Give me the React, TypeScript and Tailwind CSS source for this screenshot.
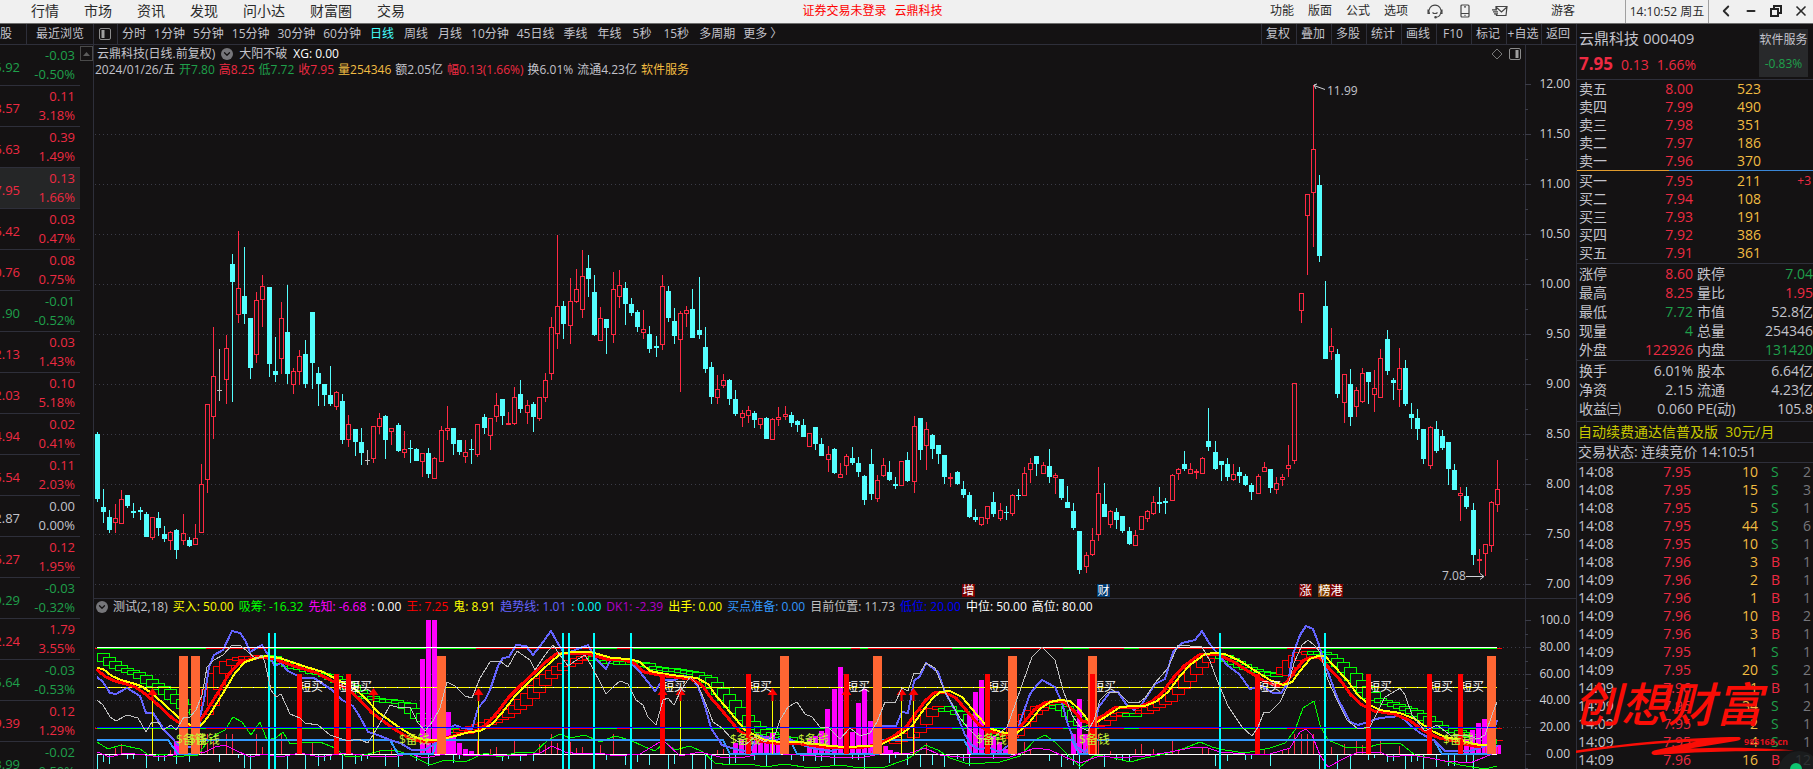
import { useState } from "react";
import { ChevronDown, ChevronLeft, Minus, X } from "lucide-react";

const MENU = ["行情", "市场", "资讯", "发现", "问小达", "财富圈", "交易"];
const TOOLS = ["功能", "版面", "公式", "选项"];
const ACTIONS = ["复权", "叠加", "多股", "统计", "画线", "F10", "标记", "+自选", "返回"];

const PERIODS = [
  { name: "分时", pad: "px-1" },
  { name: "1分钟", pad: "px-1" },
  { name: "5分钟", pad: "px-1" },
  { name: "15分钟", pad: "px-1" },
  { name: "30分钟", pad: "px-1" },
  { name: "60分钟", pad: "px-1" },
  { name: "日线", pad: "px-[5px]" },
  { name: "周线", pad: "px-[5px]" },
  { name: "月线", pad: "px-[5px]" },
  { name: "10分钟", pad: "px-1" },
  { name: "45日线", pad: "px-1" },
  { name: "季线", pad: "px-[5px]" },
  { name: "年线", pad: "px-[5px]" },
  { name: "5秒", pad: "px-1.5" },
  { name: "15秒", pad: "px-1.5" },
  { name: "多周期", pad: "px-1" },
  { name: "更多 〉", pad: "px-1" },
];

const WATCH = [
  ["5.92", "-0.03", "-0.50%"],
  ["3.57", "0.11", "3.18%"],
  ["26.63", "0.39", "1.49%"],
  ["7.95", "0.13", "1.66%"],
  ["6.42", "0.03", "0.47%"],
  ["10.76", "0.08", "0.75%"],
  ["1.90", "-0.01", "-0.52%"],
  ["2.13", "0.03", "1.43%"],
  ["2.03", "0.10", "5.18%"],
  ["4.94", "0.02", "0.41%"],
  ["5.54", "0.11", "2.03%"],
  ["2.87", "0.00", "0.00%"],
  ["6.27", "0.12", "1.95%"],
  ["9.29", "-0.03", "-0.32%"],
  ["52.24", "1.79", "3.55%"],
  ["5.64", "-0.03", "-0.53%"],
  ["9.39", "0.12", "1.29%"],
  ["3.99", "-0.02", "-0.50%"],
];

const ASKS = [
  ["卖五", "8.00", "523"],
  ["卖四", "7.99", "490"],
  ["卖三", "7.98", "351"],
  ["卖二", "7.97", "186"],
  ["卖一", "7.96", "370"],
];

const BIDS = [
  ["买一", "7.95", "211", "+3"],
  ["买二", "7.94", "108"],
  ["买三", "7.93", "191"],
  ["买四", "7.92", "386"],
  ["买五", "7.91", "361"],
];

const RED = "text-[#ee2a42]";
const GREEN = "text-[#1fa04b]";
const GRAY = "text-[#c3c3cb]";
const GOLD = "text-[#f2bd42]";

const STATS = [
  ["涨停", "8.60", RED, "跌停", "7.04", GREEN],
  ["最高", "8.25", RED, "量比", "1.95", RED],
  ["最低", "7.72", GREEN, "市值", "52.8亿", GRAY],
  ["现量", "4", GREEN, "总量", "254346", GRAY],
  ["外盘", "122926", RED, "内盘", "131420", GREEN],
];

const FUNDAMENTALS = [
  ["换手", "6.01%", GRAY, "股本", "6.64亿", GRAY],
  ["净资", "2.15", GRAY, "流通", "4.23亿", GRAY],
  ["收益㈢", "0.060", GRAY, "PE(动)", "105.8", GRAY],
];

const TRADES = [
  ["14:08", "7.95", "10", "S", "2"],
  ["14:08", "7.95", "15", "S", "3"],
  ["14:08", "7.95", "5", "S", "1"],
  ["14:08", "7.95", "44", "S", "6"],
  ["14:08", "7.95", "10", "S", "1"],
  ["14:08", "7.96", "3", "B", "1"],
  ["14:09", "7.96", "2", "B", "1"],
  ["14:09", "7.96", "1", "B", "1"],
  ["14:09", "7.96", "10", "B", "2"],
  ["14:09", "7.96", "3", "B", "1"],
  ["14:09", "7.95", "1", "S", "1"],
  ["14:09", "7.95", "20", "S", "2"],
  ["14:09", "7.96", "1", "B", "1"],
  ["14:09", "7.95", "34", "S", "2"],
  ["14:09", "7.95", "2", "S", "1"],
  ["14:09", "7.95", "4", "S", "1"],
  ["14:09", "7.96", "16", "B", "12"],
];

// open, high, low, close in cents
const CANDLES = [
  [850,852,782,785],[777,795,761,772],[767,774,751,754],[761,780,751,766],[760,794,760,785],[789,789,776,778],[773,781,766,771],
  [774,777,764,772],[770,772,747,747],[746,767,744,767],[766,772,748,756],[750,758,742,745],[743,753,734,752],[754,755,725,734],
  [743,770,739,751],[744,747,737,738],[739,760,739,746],[751,820,751,800],[804,880,791,880],[867,957,845,908],[894,935,883,894],
  [904,949,880,936],[1020,1030,882,1002],[969,1053,961,996],[988,1037,960,970],[966,966,905,916],[929,992,921,984],[984,1009,957,998],
  [997,997,907,920],[913,947,902,909],[925,982,910,966],[952,999,900,910],[899,916,890,913],[912,934,899,928],[930,944,896,900],
  [972,972,895,921],[911,917,878,900],[900,900,878,889],[889,918,878,880],[877,893,874,892],[883,890,840,844],[844,869,837,860],
  [855,855,828,842],[842,856,819,831],[824,834,819,824],[825,858,821,858],[857,871,850,866],[868,869,825,844],[852,856,839,856],
  [859,861,832,833],[831,853,826,835],[836,844,821,835],[835,836,823,823],[822,831,807,831],[831,836,806,810],[805,827,805,826],
  [822,858,822,854],[853,878,844,856],[856,856,829,840],[844,844,829,832],[827,844,821,832],[835,845,820,834],[829,860,827,860],
  [867,870,850,856],[848,866,834,866],[867,891,862,879],[885,885,859,868],[859,872,859,861],[860,897,859,887],[890,904,871,875],
  [871,884,860,879],[880,882,852,867],[865,887,863,887],[886,911,882,904],[910,967,904,957],[950,1049,935,978],[978,983,945,960],
  [958,1006,940,983],[982,1015,981,995],[974,1034,966,1008],[1016,1029,987,1005],[992,1009,948,949],[943,977,943,966],[965,965,930,956],
  [949,1012,941,995],[987,1014,976,999],[996,1002,959,980],[980,986,968,971],[972,974,952,957],[951,974,945,955],[950,958,931,935],
  [938,948,927,936],[939,1009,934,998],[993,998,962,966],[963,976,940,948],[944,973,892,971],[970,978,957,974],[975,995,946,946],
  [954,1007,945,949],[937,957,911,915],[917,922,880,887],[886,909,880,895],[898,910,896,904],[904,905,879,885],[885,894,868,870],
  [866,874,857,871],[868,878,861,874],[871,873,856,864],[859,866,855,866],[866,867,845,845],[844,866,844,865],[864,877,858,867],
  [867,878,864,870],[869,872,857,861],[863,864,852,859],[859,865,847,847],[837,851,837,851],[857,857,834,840],[840,846,828,828],
  [824,838,812,830],[835,836,810,811],[806,821,806,810],[818,830,809,828],[826,837,819,821],[821,827,807,812],[808,809,779,784],
  [820,835,784,790],[785,809,782,804],[808,826,807,819],[812,823,803,804],[800,807,795,798],[798,823,798,823],[824,832,802,803],
  [802,868,791,858],[866,866,824,834],[838,862,814,855],[849,850,825,835],[839,839,820,830],[829,829,800,807],[805,811,797,807],
  [812,813,799,800],[795,803,786,789],[789,792,766,767],[767,775,762,764],[759,767,758,767],[765,778,760,778],[782,792,767,770],
  [765,781,763,774],[772,778,764,771],[770,790,768,789],[789,795,784,788],[788,817,788,811],[814,826,801,821],[828,828,808,820],
  [810,822,810,819],[818,835,801,807],[806,811,790,809],[805,805,784,786],[782,798,776,776],[773,781,754,756],[753,753,710,714],
  [717,732,711,729],[729,756,728,744],[749,817,743,791],[780,801,767,767],[759,774,756,773],[772,776,755,764],[768,768,751,753],
  [753,757,739,740],[738,754,738,749],[754,768,754,768],[765,774,762,773],[770,788,769,782],[782,797,771,780],[783,786,770,781],
  [783,810,783,809],[810,816,804,815],[820,833,813,815],[810,821,810,815],[811,815,805,813],[810,827,810,826],[843,876,833,837],
  [832,843,814,815],[823,823,803,819],[820,826,803,807],[804,820,803,810],[812,817,801,808],[808,810,798,799],[799,801,784,792],
  [790,810,790,808],[812,822,812,817],[815,815,791,796],[794,807,790,801],[804,810,798,807],[815,839,807,819],[823,901,820,901],
  [973,991,961,991],[1068,1090,1009,1090],[1091,1199,1037,1135],[1099,1109,1022,1028],[978,1003,925,925],[932,956,924,938],[930,935,886,890],
  [881,910,861,910],[900,915,858,867],[877,897,867,894],[882,916,881,911],[912,912,880,902],[889,914,872,896],[886,935,886,926],
  [945,954,909,913],[904,906,884,901],[894,936,877,916],[916,924,878,880],[870,881,855,866],[866,875,844,855],[855,855,820,825],
  [818,858,815,857],[855,863,831,833],[848,854,834,836],[842,842,799,815],[814,820,794,794],[788,797,763,791],[788,797,775,777],
  [774,781,719,729],[724,735,711,725],[730,740,708,740],[738,783,732,782],[779,824,772,795],
];

const candleX = (i: number) => 97 + 6 * i + Math.floor(i / 7);
const priceY = (p: number) => 1284 - p;

const YELLOW_LINE =
  "97,668 103,669 112,676 121,680 132,683 141,686 150,692 163,703 178,717 190,725 200,726 204,722 210,714 225,690 235,673 245,662 257,658 266,656 280,658 300,665 323,672 340,681 355,689 365,698 378,712 400,728 415,737 425,740 440,740 455,736 470,732 480,731 492,724 502,713 515,696 527,684 541,671 553,660 562,653 575,652 590,652 605,656 612,658 630,659 640,662 650,671 665,674 680,676 697,678 708,684 717,697 725,706 735,718 745,730 755,735 765,740 780,742 800,742 830,746 845,747 870,746 882,744 900,735 912,726 922,712 932,699 940,692 950,691 962,697 972,709 985,724 992,729 1005,733 1017,733 1028,724 1040,709 1050,702 1060,700 1070,701 1080,710 1088,720 1097,722 1110,714 1120,707 1135,706 1145,706 1157,701 1168,692 1180,676 1190,665 1205,654 1215,653 1225,654 1240,661 1257,672 1270,680 1283,685 1292,682 1300,671 1310,659 1318,656 1325,656 1333,665 1347,680 1357,694 1368,704 1380,710 1400,713 1415,719 1430,730 1445,737 1460,740 1470,743 1480,745 1487,745";

const TREND_LINE =
  "97,677 103,682 110,693 116,694 127,688 140,696 146,713 153,713 165,731 172,738 178,745 186,748 198,745 200,717 204,700 209,667 214,655 223,650 232,631 240,633 245,640 250,652 262,645 268,655 275,666 281,663 288,671 302,678 314,678 332,690 342,700 353,706 360,717 368,732 378,735 390,740 400,743 412,750 425,750 436,743 445,730 455,725 462,728 472,729 478,708 485,700 490,690 498,666 503,658 509,657 516,645 526,646 533,655 540,646 551,631 560,647 565,654 575,650 588,645 595,658 606,669 611,659 620,658 630,662 640,672 655,691 663,680 675,680 683,676 690,677 698,686 705,706 711,728 722,745 735,749 750,752 757,735 775,740 788,738 800,744 815,749 832,751 840,748 860,748 875,746 882,726 896,726 902,712 908,713 914,681 920,676 926,663 938,672 945,692 955,710 965,735 972,745 978,749 990,748 1000,752 1015,740 1020,722 1030,694 1037,685 1042,680 1055,687 1062,703 1068,725 1077,747 1085,752 1093,745 1098,708 1110,692 1118,692 1126,704 1134,710 1142,704 1155,684 1165,679 1173,652 1182,643 1195,640 1202,631 1209,643 1217,653 1227,665 1239,674 1250,689 1262,686 1273,693 1281,693 1288,683 1293,654 1300,635 1306,626 1313,629 1318,642 1325,664 1337,697 1350,722 1358,725 1380,718 1400,716 1410,725 1420,733 1435,741 1445,751 1470,751 1485,746 1492,738 1497,720";

const POSITION_LINE =
  "97,700 103,705 110,717 116,721 127,715 138,718 146,732 152,722 158,722 163,730 171,725 176,730 184,717 190,717 196,710 202,695 207,667 214,660 223,655 232,645 240,645 247,651 256,659 262,655 265,663 271,690 276,697 281,694 290,714 300,718 305,723 318,725 330,735 348,741 358,739 368,743 376,730 382,720 390,705 400,708 410,707 418,723 425,731 433,721 440,708 447,682 455,686 465,696 472,698 480,678 490,662 500,661 508,667 517,651 530,660 535,670 545,655 553,645 560,655 568,666 575,661 585,655 592,667 600,682 606,694 613,687 620,681 628,684 636,700 643,705 648,717 656,725 663,700 668,698 674,705 681,690 690,677 698,685 706,704 713,722 722,728 731,738 745,745 755,737 765,742 775,735 780,720 788,707 797,702 805,714 812,717 820,727 828,727 840,739 850,728 860,736 870,733 877,722 885,702 895,703 902,688 908,691 914,673 920,673 926,663 935,668 944,690 952,704 960,718 968,728 978,738 988,740 998,734 1007,727 1015,705 1022,685 1032,657 1042,647 1055,660 1063,690 1072,715 1080,727 1088,731 1094,720 1100,700 1108,692 1118,692 1128,702 1138,703 1145,698 1155,683 1168,668 1178,645 1190,646 1202,647 1210,661 1217,680 1228,706 1242,727 1252,736 1258,727 1264,712 1270,712 1280,702 1288,685 1294,663 1302,645 1308,640 1314,645 1320,652 1328,680 1337,700 1347,720 1358,729 1370,727 1377,713 1385,697 1392,693 1400,688 1405,695 1412,715 1425,731 1437,725 1450,735 1470,736 1478,739 1485,735 1492,715 1497,702";

const GREEN_WAVE =
  "97,742 108,749 121,745 140,749 150,756 163,754 178,757 190,755 198,755 205,745 215,735 225,730 233,717 242,722 251,735 260,722 267,740 276,738 283,732 290,744 305,742 320,742 335,748 345,756 360,756 380,751 395,750 410,755 430,765 445,760 465,762 485,753 500,757 515,753 535,752 548,740 560,734 570,738 585,735 600,742 615,736 630,740 645,747 655,751 665,742 675,750 690,746 703,752 715,763 730,765 750,764 765,767 785,764 810,768 840,765 860,768 885,767 905,760 914,755 925,745 938,750 950,758 965,763 985,763 1000,762 1020,756 1035,740 1045,735 1055,742 1068,755 1080,767 1095,755 1110,757 1130,762 1145,758 1165,754 1185,748 1200,742 1212,747 1225,750 1245,753 1270,748 1285,743 1295,730 1303,708 1314,701 1320,725 1328,740 1345,747 1365,748 1380,744 1400,743 1415,755 1440,760 1460,765 1485,769 1497,766";

const MAGENTA_WAVE =
  "97,752 110,757 125,753 145,755 160,757 180,754 195,753 205,752 215,747 225,745 235,750 250,757 265,754 280,757 300,753 320,757 345,753 370,756 390,757 410,754 425,758 450,753 470,756 500,755 520,756 540,753 552,746 565,752 580,754 600,753 615,756 640,754 655,745 663,740 680,756 700,752 720,757 740,758 765,753 800,755 830,757 860,758 885,753 910,753 925,748 940,755 960,757 985,757 1010,757 1035,748 1050,750 1065,757 1080,763 1100,756 1120,758 1145,756 1170,752 1190,748 1205,747 1220,752 1245,754 1270,754 1290,748 1300,732 1306,729 1312,735 1320,755 1328,767 1345,758 1358,752 1380,752 1390,757 1410,755 1430,758 1445,761 1470,763 1485,757 1497,752";

const READY_LINE =
  "97,740 168,740 178,754 197,754 200,740 390,740 398,754 433,754 437,740 723,740 730,754 780,754 784,740 790,740 797,754 878,754 882,740 964,740 972,754 1010,754 1015,740 1072,740 1079,754 1088,754 1093,740 1434,740 1442,754 1490,754 1497,745";

// slow average the step boxes are built on
const BAND: number[][] = [
  [97,653],[103,657],[110,662],[121,668],[139,674],[151,682],[163,688],[175,698],[188,708],[196,712],[200,716],[210,700],[216,678],[222,668],
  [232,660],[250,656],[267,655],[283,662],[300,668],[330,676],[345,683],[360,693],[372,698],[390,700],[405,703],[420,717],[440,728],
  [455,731],[480,725],[500,718],[520,705],[535,690],[545,678],[560,668],[575,660],[592,655],[600,660],[640,662],[650,666],[665,668],
  [690,671],[705,677],[715,686],[730,701],[745,718],[757,728],[775,735],[800,741],[850,746],[885,743],[900,740],[912,734],[922,722],
  [930,710],[945,706],[950,710],[960,712],[968,718],[985,733],[1005,737],[1012,735],[1020,725],[1030,714],[1042,706],[1055,704],
  [1065,708],[1075,718],[1085,725],[1095,727],[1110,716],[1125,712],[1140,714],[1150,708],[1165,701],[1180,686],[1195,668],[1210,655],
  [1222,655],[1240,665],[1255,670],[1270,673],[1283,675],[1287,668],[1297,656],[1310,650],[1322,652],[1335,660],[1345,668],[1360,684],
  [1375,699],[1400,706],[1420,714],[1437,726],[1455,730],[1470,735],[1497,742],
];

const bandY = (x: number) => {
  const k = Math.max(1, BAND.findIndex((p) => p[0] >= x));
  const [x0, y0] = BAND[k - 1];
  const [x1, y1] = BAND[k];
  return Math.round(y0 + ((y1 - y0) * (x - x0)) / (x1 - x0));
};

const GREEN_SPANS = [[97,206],[270,476],[595,617],[633,851],[860,868],[952,1010],[1063,1089],[1124,1139],[1222,1287],[1320,1497]];

const MAGENTA_BARS = [
  [174,741],[420,659],[426,620],[432,620],[446,712],[451,736],[457,743],[463,749],[469,751],[733,743],[739,739],[745,742],[752,741],[758,739],
  [764,736],[770,733],[776,742],[807,738],[813,736],[819,731],[825,709],[832,689],[838,667],[850,732],[856,703],[862,689],[868,721],
  [883,746],[888,750],[894,752],[967,714],[973,692],[979,680],[991,736],[997,742],[1003,749],[1071,734],[1077,699],[1083,734],
  [1464,739],[1470,730],[1476,723],[1482,719],[1496,745],
];
const ORANGE_BARS = [179, 191, 437, 780, 873, 1008, 1088, 1487];
const RED_BARS = [297, 334, 346, 660, 746, 844, 985, 1090, 1255, 1366, 1427, 1458];
const CYAN_BARS = [268, 274, 562, 568, 593, 630, 1219, 1324];
const ARROWS = [152, 373, 478, 680, 772, 901, 913];
const BUY_LABELS = [299, 336, 348, 662, 748, 846, 987, 1092, 1257, 1368, 1429, 1460];
const CASH_LABELS = [176, 189, 399, 730, 798, 976, 1079, 1443];

const EVENTS = [
  { x: 962, label: "增", fill: "#7a0000" },
  { x: 1097, label: "财", fill: "#003a70" },
  { x: 1299, label: "涨", fill: "#7a0000" },
  { x: 1318, label: "榜", fill: "#7f4000" },
  { x: 1330, label: "港", fill: "#7a0000" },
];

const INDICATORS = [
  ["测试(2,18)", "text-[#c3c3cb]"],
  ["买入: 50.00", "text-[#ffff00]"],
  ["吸筹: -16.32", "text-[#00ff00]"],
  ["先知: -6.68", "text-[#ff00ff]"],
  [": 0.00", "text-white"],
  ["王: 7.25", "text-[#ff0000]"],
  ["鬼: 8.91", "text-[#ffff00]"],
  ["趋势线: 1.01", "text-[#6464ff]"],
  [": 0.00", "text-[#00ffff]"],
  ["DK1: -2.39", "text-[#b400c8]"],
  ["出手: 0.00", "text-[#ffff00]"],
  ["买点准备: 0.00", "text-[#3399ff]"],
  ["目前位置: 11.73", "text-[#c0c0c0]"],
  ["低位: 20.00", "text-[#0000ff]"],
  ["中位: 50.00", "text-white"],
  ["高位: 80.00", "text-white"],
];

const QUOTE = [
  ["2024/01/26/五", GRAY],
  ["开7.80", GREEN],
  ["高8.25", RED],
  ["低7.72", GREEN],
  ["收7.95", RED],
  ["量254346", GOLD],
  ["额2.05亿", GRAY],
  ["幅0.13(1.66%)", RED],
  ["换6.01%", GRAY],
  ["流通4.23亿", GRAY],
  ["软件服务", GOLD],
];

function tone(value: string) {
  if (value.startsWith("-")) return GREEN;
  return Number.parseFloat(value) === 0 ? GRAY : RED;
}

export default function App() {
  return (
    <div className="flex h-screen flex-col overflow-hidden bg-[#141213] font-['Open_Sans','Noto_Sans_CJK_SC',sans-serif] text-xs leading-4 text-[#c3c3cb]">
      <TopBar />
      <div className="flex min-h-0 flex-1">
        <Watchlist />
        <main className="min-w-0 flex-1">
          <PeriodBar />
          <PriceChart />
          <IndicatorChart />
        </main>
        <QuotePanel />
      </div>
    </div>
  );
}

function TopBar() {
  return (
    <header className="flex h-6 shrink-0 items-center border-b border-[#6d6d6d] bg-[#f0f0f0] pb-px whitespace-nowrap text-[#2a2a2a]">
      <nav className="flex gap-[25px] pl-[31px] text-sm leading-5">
        {MENU.map((m) => (
          <button key={m}>{m}</button>
        ))}
      </nav>
      <div className="flex flex-1 justify-center gap-2 pl-[70px] text-[#ff0000]">
        <span>证券交易未登录</span>
        <span>云鼎科技</span>
      </div>
      <div className="flex gap-3.5">
        {TOOLS.map((t) => (
          <button key={t}>{t}</button>
        ))}
      </div>
      <div className="ml-[19px] flex items-center gap-4 text-[#444]">
        <button aria-label="客服">
          <svg width="16" height="16" viewBox="0 0 16 16" fill="none" stroke="currentColor" strokeWidth="1.1">
            <path d="M2.500 10.500A6 6 0 1 1 13.500 10.500M2 7H1v3.500h2M13.500 7H15v3.500h-1.500M5.500 9.500a3.500 3.500 0 0 0 5 0M13.500 10.500c-.5 2.500-2 3.500-4.500 3.700" />
            <circle cx="8.500" cy="14.200" r=".7" fill="currentColor" />
          </svg>
        </button>
        <button aria-label="手机">
          <svg width="12" height="14" viewBox="0 0 12 14" fill="none" stroke="currentColor" strokeWidth="1.200">
            <rect x="2" y="1" width="8" height="12" rx="1" />
            <path d="M2 9.500h8M5.500 11.300h1M5 2.800h2" />
          </svg>
        </button>
        <button aria-label="邮件" className="ml-1">
          <svg width="18" height="14" viewBox="0 0 18 14" fill="none" stroke="currentColor" strokeWidth="1.200">
            <path d="M5 5.500V2.500h11l-1 9H5.500L5 10M5 3l5.500 5L16 3M1 5.800h5M2 7.800h5M3 9.800h4" />
          </svg>
        </button>
      </div>
      <button className="ml-[42px]">游客</button>
      <time className="ml-[50px] w-[84px] border-x border-[#a0a0a0] text-center leading-[23px]">14:10:52 周五</time>
      <div className="flex items-center gap-2 pr-1 pl-2">
        <button aria-label="后退">
          <ChevronLeft className="h-[18px] w-[18px]" strokeWidth={2.5} />
        </button>
        <button aria-label="最小化" className="px-0.5">
          <Minus className="h-3 w-3" strokeWidth={4} />
        </button>
        <button aria-label="还原" className="px-0.5">
          <svg width="14" height="14" viewBox="0 0 14 14" fill="none" stroke="#222" strokeWidth="2">
            <path d="M2 5h7v7H2zM5 4V2h7v7h-2" />
          </svg>
        </button>
        <button aria-label="关闭">
          <X className="h-4 w-4" strokeWidth={2.5} />
        </button>
      </div>
    </header>
  );
}

function Watchlist() {
  return (
    <aside className="w-[94px] shrink-0 overflow-hidden border-r border-[#2e2f3a]">
      <div className="flex h-[21px] items-center border-b border-[#2e2f3a]">
        <button className="h-full w-[27px] overflow-hidden border-r border-[#2e2f3a] pr-[15px] text-right">股</button>
        <button className="flex-1 whitespace-nowrap">最近浏览</button>
      </div>
      <div className="flex items-start">
        <ul className="flex-1 text-[13px]">
          {WATCH.map(([price, change, pct]) => (
            <li
              key={price}
              className={`flex h-[41px] items-center border-b border-[#2e2f3a] pr-[5px] ${price === "7.95" ? "bg-[#252627]" : ""}`}
            >
              <span className={`flex w-5 shrink-0 justify-end overflow-hidden pt-1 ${tone(change)}`}>{price}</span>
              <span className={`flex-1 text-right leading-[19px] ${tone(change)}`}>
                {change}
                <br />
                {pct}
              </span>
            </li>
          ))}
        </ul>
        <button aria-label="向上" className="mt-px flex h-[15px] w-[13px] items-center justify-center border border-[#4a4a4a]">
          <svg width="7" height="4" viewBox="0 0 7 4">
            <path d="M0 4L3.500 0 7 4z" fill="#5c5c5c" />
          </svg>
        </button>
      </div>
    </aside>
  );
}

function PeriodBar() {
  const [period, setPeriod] = useState("日线");

  return (
    <div className="flex h-[21px] items-stretch overflow-hidden border-b border-[#2e2f3a] whitespace-nowrap">
      <button aria-label="侧栏" className="flex w-6 shrink-0 items-center justify-center border-r border-[#2e2f3a] pr-0.5">
        <PanelIcon className="-scale-x-100" />
      </button>
      <div className="flex flex-1">
        {PERIODS.map((p) => (
          <button key={p.name} onClick={() => setPeriod(p.name)} className={`${p.pad} ${p.name === period ? "text-[#4ff]" : ""}`}>
            {p.name}
          </button>
        ))}
      </div>
      {ACTIONS.map((a) => (
        <button key={a} className="w-[35px] border-l border-[#2e2f3a] pr-0.5 text-center">
          {a}
        </button>
      ))}
    </div>
  );
}

function PanelIcon({ className = "" }: { className?: string }) {
  return (
    <svg width="12" height="12" viewBox="0 0 12 12" className={className}>
      <rect x=".5" y=".5" width="11" height="11" rx="1.500" fill="none" stroke="#8c8c8c" />
      <rect x="6.500" y="2" width="3" height="8" fill="#a0a0a0" />
    </svg>
  );
}

function RoundToggle() {
  return (
    <button aria-label="指标菜单" className="flex h-3 w-3 items-center justify-center rounded-full bg-[#76767a] text-[#141213]">
      <ChevronDown className="h-2.5 w-2.5" strokeWidth={3} />
    </button>
  );
}

function PriceChart() {
  const levels = [1200, 1150, 1100, 1050, 1000, 950, 900, 850, 800, 750, 700];

  return (
    <section>
      <div className="flex h-[34px]">
        <div className="flex-1 border-r border-[#2e2f3a] pt-px pl-px whitespace-nowrap">
          <div className="flex items-center gap-1.5 pl-0.5">
            <h1>云鼎科技(日线.前复权)</h1>
            <RoundToggle />
            <span>大阳不破</span>
            <span className="text-white">XG: 0.00</span>
            <span className="ml-auto flex items-center gap-1.5 pr-1">
              <svg width="12" height="12" viewBox="0 0 12 12" fill="none" stroke="#777">
                <path d="M6 1l5 5-5 5-5-5z" />
              </svg>
              <PanelIcon />
            </span>
          </div>
          <div className="flex gap-1">
            {QUOTE.map(([text, color]) => (
              <span key={text} className={color}>
                {text}
              </span>
            ))}
          </div>
        </div>
        <div className="w-[50px]" />
      </div>
      <svg viewBox="94 79 1482 519" preserveAspectRatio="none" className="block w-full" fontSize="12">
        <g shapeRendering="crispEdges">
          {levels.slice(1).map((p) => (
            <line key={p} x1="95" x2="1525" y1={priceY(p) + 0.5} y2={priceY(p) + 0.5} stroke="#3b3b47" strokeDasharray="1 3" />
          ))}
          <path d="M1525.500 79V598" stroke="#2e2f3a" />
          {levels.map((p) => (
            <path key={p} d={`M1525 ${priceY(p) + 0.5}h6M1525 ${priceY(p) + 25.5}h3`} stroke="#3b3c48" />
          ))}
          {CANDLES.map(([o, h, l, c], i) => {
            const x = candleX(i);
            const top = priceY(Math.max(o, c));
            const bottom = priceY(Math.min(o, c));
            if (o === c) {
              return <path key={i} d={`M${x + 0.5} ${priceY(h)}V${priceY(l)}M${x - 2} ${top + 0.5}h5`} stroke="#c0c0c0" />;
            }
            if (c < o) {
              return (
                <g key={i} fill="#54ffff">
                  <rect x={x} y={priceY(h)} width="1" height={h - l} />
                  <rect x={x - 2} y={top} width="5" height={bottom - top} />
                </g>
              );
            }
            return (
              <g key={i} stroke="#ff2943" fill="none">
                <path d={`M${x + 0.5} ${priceY(h)}V${top}M${x + 0.5} ${bottom}V${priceY(l)}`} />
                <rect x={x - 1.5} y={top + 0.5} width="4" height={Math.max(1, bottom - top - 1)} />
              </g>
            );
          })}
        </g>
        <g fill="#d0d0d6" textAnchor="end">
          {levels.map((p) => (
            <text key={p} x="1570" y={priceY(p) + 4}>
              {(p / 100).toFixed(2)}
            </text>
          ))}
        </g>
        <g stroke="#d0d0d6" fill="none">
          <path d="M1325 89.500l-11-4M1314 85l3-1M1314 85l2 4" />
          <path d="M1466 576.500h18M1480 573.500l4 3-4 3" />
        </g>
        <g fill="#c3c3cb">
          <text x="1327" y="95">11.99</text>
          <text x="1442" y="580">7.08</text>
        </g>
        {EVENTS.map((e) => (
          <g key={e.x}>
            <rect x={e.x} y="584" width="13" height="13" fill={e.fill} />
            <text x={e.x + 0.5} y="595" fill="#fff">
              {e.label}
            </text>
          </g>
        ))}
      </svg>
    </section>
  );
}

function IndicatorChart() {
  const scale = [
    ["100.0", 620],
    ["80.00", 647],
    ["60.00", 674],
    ["40.00", 700],
    ["20.00", 727],
    ["0.00", 754],
  ] as const;
  const redLine = YELLOW_LINE.split(" ")
    .map((p) => p.split(",").map(Number))
    .map(([x, y]) => `${Math.max(97, x - 6)},${y + 1}`)
    .join(" ");

  return (
    <section className="border-t border-[#2e2f3a]">
      <div className="flex h-[17px]">
        <div className="flex flex-1 items-center gap-[5px] border-r border-[#2e2f3a] pb-0.5 pl-0.5 whitespace-nowrap">
          <RoundToggle />
          {INDICATORS.map(([text, color], i) => (
            <span key={i} className={color}>
              {text}
            </span>
          ))}
        </div>
        <div className="w-[50px]" />
      </div>
      <svg viewBox="94 616 1482 153" preserveAspectRatio="none" className="block w-full overflow-visible" fontSize="12">
        <g shapeRendering="crispEdges" fill="none">
          {scale.slice(1, 5).map(([label, y]) => (
            <line key={label} x1="95" x2="1525" y1={y + 0.5} y2={y + 0.5} stroke="#3b3b47" strokeDasharray="1 3" />
          ))}
          <path d="M1525.500 616V769" stroke="#2e2f3a" />
          {scale.map(([label, y]) => (
            <path key={label} d={`M1525 ${y + 0.5}h6M1525 ${y + 14.5}h3`} stroke="#3b3c48" />
          ))}
          {[648, 728].map((y) => (
            <g key={y}>
              <rect x="95" y={y} width="1407" height="1" fill="#ff0000" />
              {GREEN_SPANS.map(([a, b]) => (
                <rect key={a} x={a} y={y} width={b - a} height="1" fill="#00ff00" />
              ))}
            </g>
          ))}
          {CANDLES.slice(0, -1).map((_, i) => {
            const x = candleX(i);
            const y0 = bandY(x);
            const y1 = bandY(Math.min(1497, x + 12));
            if (x > 787 && x < 885) return null;
            return (
              <rect
                key={i}
                x={x + 0.5}
                y={Math.min(y0, y1) + 0.5}
                width={Math.min(12, 1496 - x)}
                height={Math.max(3, Math.abs(y1 - y0))}
                fill="#141213"
                stroke={y1 >= y0 ? "#00ff00" : "#ff0000"}
              />
            );
          })}
          {MAGENTA_BARS.map(([x, y]) => (
            <rect key={x} x={x} y={y} width="5" height={754 - y} fill="#ff00ff" />
          ))}
          {CANDLES.map(([o, , , c], i) => {
            const diff = c - (i ? CANDLES[i - 1][3] : o);
            const x = candleX(i) + 0.5;
            if (Math.abs(diff) < 6) return null;
            return diff < 0 ? (
              <path key={i} d={`M${x} 755v${Math.min(14, Math.round(-diff / 2))}`} stroke="#54ffff" />
            ) : (
              <path key={i} d={`M${x} 754v${-Math.min(20, Math.round(diff / 2))}`} stroke="#ff2943" />
            );
          })}
          <path d="M97 687.500H1497" stroke="#ffff00" />
          <path d="M97 754.500H1497" stroke="#ffffff" />
          <path d="M97 687.500H1497" stroke="#ffffff" strokeDasharray="1 11" />
          <polyline points={GREEN_WAVE} stroke="#00ff00" />
          <polyline points={MAGENTA_WAVE} stroke="#ff00ff" />
          <polyline points={READY_LINE} stroke="#3399ff" strokeWidth="2" />
          <polyline points={TREND_LINE} stroke="#6464ff" strokeWidth="2" />
          <polyline points={redLine} stroke="#ff0000" strokeWidth="3" />
          <polyline points={YELLOW_LINE} stroke="#ffff00" strokeWidth="2" />
          {ARROWS.map((x) => (
            <rect key={x} x={x} y="698" width="1" height="56" fill="#ffff00" />
          ))}
        </g>
        {[...ARROWS, 662, 846].map((x) => (
          <path key={x} d={`M${x + 0.5} 688l5 7h-4v6h-2v-6h-4z`} fill="#ff0000" />
        ))}
        <g fill="#ffffff">
          {BUY_LABELS.map((x) => (
            <text key={x} x={x} y="691">
              短买
            </text>
          ))}
        </g>
        <g shapeRendering="crispEdges" fill="none">
          {ORANGE_BARS.map((x) => (
            <rect key={x} x={x} y="656" width="9" height="98" fill="#ff6633" />
          ))}
          {RED_BARS.map((x) => (
            <rect key={x} x={x} y="674" width="5" height="80" fill="#ff0000" />
          ))}
          {CYAN_BARS.map((x) => (
            <rect key={x} x={x} y="633" width="2" height="136" fill="#00ffff" />
          ))}
          <rect x="97" y="647" width="1400" height="1" fill="#ffffff" />
          <rect x="97" y="727" width="1400" height="1" fill="#0000ff" />
          <polyline points={POSITION_LINE} stroke="#c0c0c0" />
          <path d="M1497 648.500h5M1497 728.500h5M1497 740.500h6" stroke="#ff0000" />
        </g>
        <g fill="#c3f032">
          {CASH_LABELS.map((x) => (
            <text key={x} x={x} y="744">
              $备钱
            </text>
          ))}
        </g>
        <g fill="#d0d0d6" textAnchor="end">
          {scale.map(([label, y]) => (
            <text key={label} x="1570" y={y + 4}>
              {label}
            </text>
          ))}
        </g>
      </svg>
    </section>
  );
}

function BookRows({ rows }: { rows: string[][] }) {
  return (
    <table className="w-full table-fixed text-sm leading-[18px]">
      <tbody>
        {rows.map(([label, price, volume, extra]) => (
          <tr key={label}>
            <th className="w-[50px] p-0 pl-0.5 text-left font-normal">{label}</th>
            <td className={`w-[66px] p-0 text-right ${RED}`}>{price}</td>
            <td className={`w-[68px] p-0 text-right ${GOLD}`}>{volume}</td>
            <td className={`p-0 pr-0.5 text-right text-xs leading-[18px] ${RED}`}>{extra}</td>
          </tr>
        ))}
      </tbody>
    </table>
  );
}

function StatRows({ rows }: { rows: string[][] }) {
  return (
    <table className="w-full table-fixed text-sm leading-[19px] whitespace-nowrap">
      <tbody>
        {rows.map(([label, value, color, label2, value2, color2]) => (
          <tr key={label}>
            <th className="w-[50px] p-0 pl-0.5 text-left font-normal">{label}</th>
            <td className={`w-[66px] p-0 text-right ${color}`}>{value}</td>
            <th className="w-[54px] p-0 pl-1 text-left font-normal">{label2}</th>
            <td className={`p-0 text-right ${color2}`}>{value2}</td>
          </tr>
        ))}
      </tbody>
    </table>
  );
}

function QuotePanel() {
  return (
    <aside className="relative w-[237px] shrink-0 border-l border-[#2e2f3a]">
      <div className="flex h-14 justify-between border-b border-[#2e2f3a] pt-1 pr-[5px] pl-0.5">
        <div>
          <h2 className="text-[15px] leading-5">云鼎科技 000409</h2>
          <p className={`flex items-baseline gap-2 pt-1 text-sm leading-6 ${RED}`}>
            <strong className="text-[17px]">7.95</strong>
            <span>0.13</span>
            <span>1.66%</span>
          </p>
        </div>
        <div className="mt-px h-12 w-[49px] bg-[#28292b] pt-[3px] text-center whitespace-nowrap">
          <p>软件服务</p>
          <p className={`pt-2 ${GREEN}`}>-0.83%</p>
        </div>
      </div>
      <BookRows rows={ASKS} />
      <div className="flex h-0.5">
        <span className="h-px w-[92px] bg-[#e09b2d]" />
        <span className="h-px flex-1 bg-[#3a86d6]" />
      </div>
      <div className="border-b border-[#2e2f3a] pb-px">
        <BookRows rows={BIDS} />
      </div>
      <div className="border-b border-[#2e2f3a] pb-px">
        <StatRows rows={STATS} />
      </div>
      <div className="border-b border-[#2e2f3a] pb-[3px]">
        <StatRows rows={FUNDAMENTALS} />
      </div>
      <a href="#renew" className="block border-b border-[#2e2f3a] pl-px text-sm leading-5 text-[#c8c800]">
        自动续费通达信普及版&nbsp; 30元/月
      </a>
      <p className="border-b border-[#2e2f3a] pb-px pl-px text-sm leading-[18px]">交易状态: 连续竞价 14:10:51</p>
      <table className="w-full table-fixed text-sm leading-[18px]">
        <tbody>
          {TRADES.map(([time, price, volume, side, count], i) => (
            <tr key={i}>
              <td className="w-[50px] p-0 pl-px">{time}</td>
              <td className={`w-16 p-0 text-right ${RED}`}>{price}</td>
              <td className={`w-[67px] p-0 text-right ${GOLD}`}>{volume}</td>
              <td className={`w-[25px] p-0 pl-[13px] ${side === "S" ? GREEN : RED}`}>{side}</td>
              <td className="p-0 pr-0.5 text-right text-[#77777c]">{count}</td>
            </tr>
          ))}
        </tbody>
      </table>
      <svg width="240" height="100" viewBox="1573 669 240 100" className="pointer-events-none absolute right-0 bottom-0">
        <circle cx="1799" cy="772" r="21" fill="#1c1f20" opacity=".8" />
        <circle cx="1796" cy="769" r="6" fill="#0fc470" />
        <text x="1574" y="722" fontSize="47" fontStyle="italic" fontWeight="500" fill="#fa0d06">
          创想财富
        </text>
        <path
          d="M1576 750.500C1620 744 1690 737 1739 737C1742 738 1741 740 1736 741L1690 748.500C1730 747 1765 748 1794 750.500C1760 751 1700 751 1656 755C1650 755 1650 751 1656 750L1696 741.500C1650 743 1610 748 1576 753z"
          fill="#fa0d06"
        />
        <text x="1744" y="745" fontSize="9" fontWeight="700" fill="#e0101c">
          985168.cn
        </text>
      </svg>
    </aside>
  );
}
